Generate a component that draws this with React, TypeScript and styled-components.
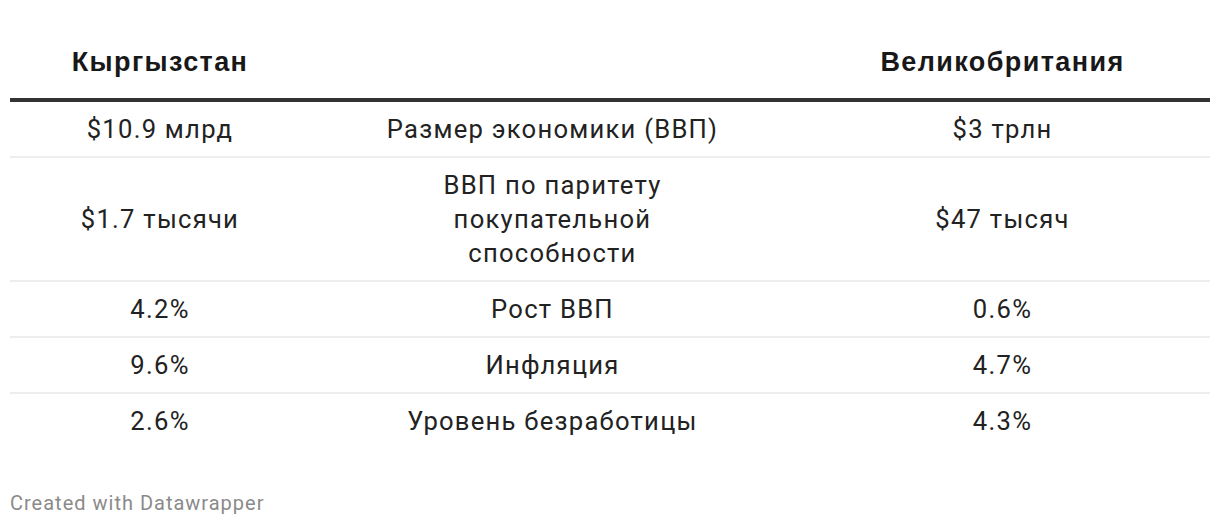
import styled, { createGlobalStyle } from "styled-components";

const GlobalStyle = createGlobalStyle`
  html, body {
    margin: 0;
    padding: 0;
    background: #ffffff;
  }
`;

type Row = {
  left: string;
  label: string;
  right: string;
};

const rows: Row[] = [
  { left: "$10.9 млрд", label: "Размер экономики (ВВП)", right: "$3 трлн" },
  { left: "$1.7 тысячи", label: "ВВП по паритету покупательной способности", right: "$47 тысяч" },
  { left: "4.2%", label: "Рост ВВП", right: "0.6%" },
  { left: "9.6%", label: "Инфляция", right: "4.7%" },
  { left: "2.6%", label: "Уровень безработицы", right: "4.3%" },
];

export default function App() {
  return (
    <Page>
      <GlobalStyle />
      <Table>
        <HeadRow>
          <HeadCell>Кыргызстан</HeadCell>
          <HeadCell />
          <HeadCell>Великобритания</HeadCell>
        </HeadRow>
        {rows.map((row, i) => (
          <BodyRow key={`row-${i}`} $last={i === rows.length - 1}>
            <Cell>{row.left}</Cell>
            <Cell>
              <Label>{row.label}</Label>
            </Cell>
            <Cell>{row.right}</Cell>
          </BodyRow>
        ))}
      </Table>
      <Footer>Created with Datawrapper</Footer>
    </Page>
  );
}

const Page = styled.div`
  padding: 0 10px;
  font-family: Roboto, "Liberation Sans", sans-serif;
  color: #222222;
`;

const Table = styled.div`
  width: 1200px;
`;

const HeadRow = styled.div`
  display: grid;
  grid-template-columns: 300px 485px 1fr;
  padding: 45px 0 19px;
  border-bottom: 4px solid #333333;
`;

const HeadCell = styled.div`
  font-family: "Liberation Sans", Arial, sans-serif;
  font-weight: 700;
  font-size: 27px;
  line-height: 34px;
  letter-spacing: 1.4px;
  color: #181818;
  text-align: center;
`;

const BodyRow = styled.div<{ $last?: boolean }>`
  display: grid;
  grid-template-columns: 300px 485px 1fr;
  align-items: center;
  padding: 10px 0;
  border-bottom: ${(p) => (p.$last ? "none" : "2px solid #eeeeee")};
`;

const Cell = styled.div`
  font-size: 25.6px;
  line-height: 34px;
  letter-spacing: 1.25px;
  text-align: center;
`;

const Label = styled.div`
  max-width: 360px;
  margin: 0 auto;
`;

const Footer = styled.div`
  margin-top: 42px;
  font-size: 20px;
  line-height: 26px;
  letter-spacing: 1px;
  color: #8a8a8a;
`;
